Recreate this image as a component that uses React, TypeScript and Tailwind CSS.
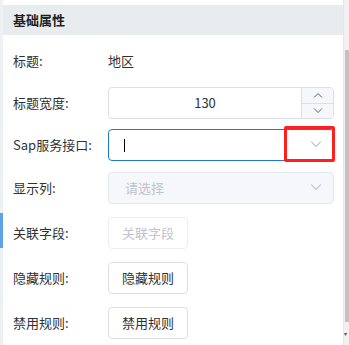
import React from "react";

const font = {fontFamily: '"Noto Sans CJK SC", "Noto Sans", sans-serif'};

const Chevron = ({up = false, className = "", w = 10}: {up?: boolean; className?: string; w?: number}) => (
    <svg width={w} height={w * 0.6} viewBox="0 0 10 6" className={className}>
        <path
            d={up ? "M1 5.5 L5 1.5 L9 5.5" : "M1 0.5 L5 4.5 L9 0.5"}
            fill="none"
            stroke="currentColor"
            strokeWidth="1"
        />
    </svg>
);

const Label = ({children}: {children: React.ReactNode}) => (
    <div className="w-[95px] shrink-0 text-[13px] text-[#303133]">{children}</div>
);

export default function App() {
    return (
        <div className="flex h-[345px] w-[349px] overflow-hidden bg-white" style={font}>
            <div className="relative w-[3px] shrink-0 bg-[#eef1f4]">
                <div className="absolute left-0 top-[213px] h-[35px] w-[3px] bg-[#5ea3e8]" />
            </div>

            <div className="flex w-[340px] shrink-0 flex-col pt-[5px]">
                <div className="flex h-[30px] items-center bg-[#e8ecef] pl-[10px] text-[13px] font-bold text-[#1f1f1f]">
                    基础属性
                </div>

                <div className="flex flex-col pl-[10px] pr-[9px]">
                    <div className="mt-[10px] flex h-8 items-center">
                        <Label>标题:</Label>
                        <span className="text-[13px] text-[#303133]">地区</span>
                    </div>

                    <div className="mt-[10px] flex h-8 items-center">
                        <Label>标题宽度:</Label>
                        <div className="flex h-8 w-[226px] overflow-hidden rounded border border-[#dcdfe6]">
                            <div className="flex flex-1 items-center justify-center text-[13px] text-[#303133]">
                                130
                            </div>
                            <div className="flex w-[32px] flex-col border-l border-[#dcdfe6] bg-[#f5f7fa] text-[#606266]">
                                <div className="flex flex-1 items-center justify-center border-b border-[#dcdfe6]">
                                    <Chevron up />
                                </div>
                                <div className="flex flex-1 items-center justify-center">
                                    <Chevron />
                                </div>
                            </div>
                        </div>
                    </div>

                    <div className="mt-[10px] flex h-8 items-center">
                        <Label>Sap服务接口:</Label>
                        <div className="relative flex h-8 w-[226px] items-center rounded border border-[#1c78d2] pl-[15px] pr-[11px]">
                            <div className="h-[13px] w-px bg-black" />
                            <div className="flex-1" />
                            <Chevron w={12} className="text-[#c0c4cc]" />
                            <div className="absolute left-[175px] top-[-4px] h-[36px] w-[51px] rounded-[2px] border-[3px] border-[#ff1f1f]" />
                        </div>
                    </div>

                    <div className="mt-[11px] flex h-8 items-center">
                        <Label>显示列:</Label>
                        <div className="flex h-8 w-[226px] items-center rounded border border-[#e4e7ed] bg-[#f5f7fa] pl-[16px] pr-[11px]">
                            <span className="flex-1 text-[13px] text-[#c0c4cc]">请选择</span>
                            <Chevron w={12} className="text-[#c0c4cc]" />
                        </div>
                    </div>

                    <div className="mt-[13px] flex h-8 items-center">
                        <Label>关联字段:</Label>
                        <div className="flex h-8 w-[80px] items-center justify-center rounded border border-[#ebeef5] text-[13px] text-[#c0c4cc]">
                            关联字段
                        </div>
                    </div>

                    <div className="mt-[13px] flex h-8 items-center">
                        <Label>隐藏规则:</Label>
                        <div className="flex h-8 w-[80px] items-center justify-center rounded border border-[#dcdfe6] text-[13px] text-[#303133]">
                            隐藏规则
                        </div>
                    </div>

                    <div className="mt-[13px] flex h-8 items-center">
                        <Label>禁用规则:</Label>
                        <div className="flex h-8 w-[80px] items-center justify-center rounded border border-[#dcdfe6] text-[13px] text-[#303133]">
                            禁用规则
                        </div>
                    </div>
                </div>
            </div>

            <div className="relative w-[6px] shrink-0 border-l border-[#e6e6e6] bg-[#f1f1f1]">
                <div className="absolute left-[1px] top-[50px] h-[272px] w-[4px] bg-[#c1c1c1]" />
                <div className="absolute left-[0px] top-[331px] text-[6px] leading-none text-[#505050]">▾</div>
            </div>
        </div>
    );
}
